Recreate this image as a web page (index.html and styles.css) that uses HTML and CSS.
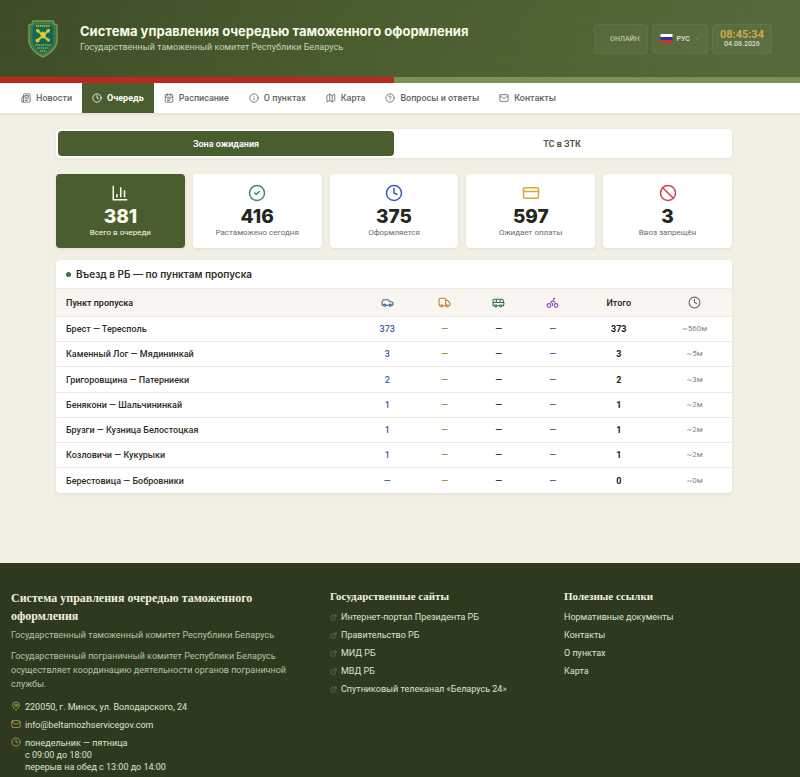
FILE: index.html
```
<!DOCTYPE html>
<html lang="ru">
<head>
    <meta charset="utf-8">
    <meta name="viewport" content="width=device-width,initial-scale=1">
    <title>Система управления очередью таможенного оформления</title>
    <link rel="stylesheet" href="styles.css">
</head>
<body>
    <!-- общие иконки -->
    <svg class="sprite" aria-hidden="true">
        <symbol id="i-clock" viewBox="0 0 24 24"><circle cx="12" cy="12" r="10"/><path d="M12 6v6l4 2"/></symbol>
        <symbol id="i-mail" viewBox="0 0 24 24"><rect x="2" y="4" width="20" height="16" rx="2"/><path d="m22 7-8.97 5.7a1.94 1.94 0 0 1-2.06 0L2 7"/></symbol>
        <symbol id="i-link" viewBox="0 0 24 24"><path d="M15 3h6v6M10 14 21 3M18 13v6a2 2 0 0 1-2 2H5a2 2 0 0 1-2-2V8a2 2 0 0 1 2-2h6"/></symbol>
    </svg>

    <header class="header">
        <svg class="logo" viewBox="0 0 30 38" role="img" aria-label="Герб">
            <path d="M5 1h20l1 3 3 1v15c0 8-6 13-14 17C7 33 1 28 1 20V5l3-1z" fill="#3f7443" stroke="#779c50" stroke-width="1.4"/>
            <path d="M6 4h18l2 3v13c0 7-5 11-11 14C9 31 4 27 4 20V7z" fill="#12665a" stroke="#4d8d48" stroke-width="0.7"/>
            <path d="M8 6h14" stroke="#b3aa35" stroke-width="2.2" stroke-dasharray="1.3 0.6"/>
            <path d="m9 10 12 11M21 10 9 21" stroke="#d8c52a" stroke-width="2.2"/>
            <path d="m8 9 4 1-3 3zM18 10l4-1-1 4zM12 14l3-3 3 4-3 4z" fill="#e5d02d"/>
            <circle cx="9.500" cy="20.500" r="2" fill="#e0cb2b"/>
            <circle cx="20.500" cy="20" r="1.400" fill="#d8c52a"/>
            <path d="M7 25h16M9 28h12M12 31h6" stroke="#a3a637" stroke-width="1.6" stroke-dasharray="1.4 0.5"/>
        </svg>
        <div class="brand">
            <h1>Система управления очередью таможенного оформления</h1>
            <p>Государственный таможенный комитет Республики Беларусь</p>
        </div>
        <div class="tools">
            <div class="chip online"><span class="online-dot"></span>ОНЛАЙН</div>
            <button class="chip lang" type="button">
                <svg class="flag" viewBox="0 0 12 9"><path fill="#fff" d="M0 0h12v3H0z"/><path fill="#2436a5" d="M0 3h12v3H0z"/><path fill="#d52b2b" d="M0 6h12v3H0z"/></svg>
                РУС
                <svg class="icon chevron" viewBox="0 0 24 24"><path d="m6 9 6 6 6-6"/></svg>
            </button>
            <div class="chip clock"><b>08:45:34</b><span>04.08.2026</span></div>
        </div>
    </header>

    <nav class="nav">
        <a href="#news"><svg class="icon" viewBox="0 0 24 24"><path d="M4 22h16a2 2 0 0 0 2-2V4a2 2 0 0 0-2-2H8a2 2 0 0 0-2 2v16a2 2 0 0 1-4 0v-9a2 2 0 0 1 2-2h2M18 14h-8M15 18h-5M10 6h8v4h-8z"/></svg>Новости</a>
        <a href="#queue" class="active"><svg class="icon"><use href="#i-clock"/></svg>Очередь</a>
        <a href="#schedule"><svg class="icon" viewBox="0 0 24 24"><path d="M8 2v4M16 2v4M3 10h18M8 14h8M8 18h5"/><rect x="3" y="4" width="18" height="18" rx="2"/></svg>Расписание</a>
        <a href="#points"><svg class="icon" viewBox="0 0 24 24"><circle cx="12" cy="12" r="10"/><path d="M12 16v-4M12 8h.01"/></svg>О пунктах</a>
        <a href="#map"><svg class="icon" viewBox="0 0 24 24"><path d="m3 6 6-3 6 3 6-3v15l-6 3-6-3-6 3zM9 3v15M15 6v15"/></svg>Карта</a>
        <a href="#faq"><svg class="icon" viewBox="0 0 24 24"><circle cx="12" cy="12" r="10"/><path d="M9.090 9a3 3 0 0 1 5.830 1c0 2-3 3-3 3M12 17h.01"/></svg>Вопросы и ответы</a>
        <a href="#contacts"><svg class="icon"><use href="#i-mail"/></svg>Контакты</a>
    </nav>

    <main class="main">
        <div class="tabs" role="tablist">
            <button type="button" role="tab" aria-selected="true" class="active">Зона ожидания</button>
            <button type="button" role="tab" aria-selected="false">ТС в ЗТК</button>
        </div>

        <section class="stats">
            <div class="stat total">
                <svg class="icon" viewBox="0 0 24 24"><path d="M3 3v18h18M18 17V9M13 17V5M8 17v-3"/></svg>
                <strong>381</strong><span>Всего в очереди</span>
            </div>
            <div class="stat">
                <svg class="icon green" viewBox="0 0 24 24"><circle cx="12" cy="12" r="10"/><path d="m9 12 2 2 4-4"/></svg>
                <strong>416</strong><span>Растаможено сегодня</span>
            </div>
            <div class="stat">
                <svg class="icon blue"><use href="#i-clock"/></svg>
                <strong>375</strong><span>Оформляется</span>
            </div>
            <div class="stat">
                <svg class="icon amber" viewBox="0 0 24 24"><rect x="2" y="5" width="20" height="14" rx="2"/><path d="M2 10h20"/></svg>
                <strong>597</strong><span>Ожидает оплаты</span>
            </div>
            <div class="stat">
                <svg class="icon red" viewBox="0 0 24 24"><circle cx="12" cy="12" r="10"/><path d="m4.900 4.900 14.200 14.200"/></svg>
                <strong>3</strong><span>Ввоз запрещён</span>
            </div>
        </section>

        <section class="queue">
            <h2>Въезд в РБ — по пунктам пропуска</h2>
            <table>
                <thead>
                    <tr>
                        <th class="name">Пункт пропуска</th>
                        <th class="car" aria-label="Легковые"><svg class="icon" viewBox="0 0 24 24"><path d="M19 17h2c.6 0 1-.4 1-1v-3c0-1-.7-1.700-1.500-1.900L16 10s-1.300-1.400-2.200-2.300A2.400 2.400 0 0 0 12 7H5c-.6 0-1.100.4-1.400.9l-1.400 2.900A3.700 3.700 0 0 0 2 12v4c0 .6.4 1 1 1h2M9 17h6"/><circle cx="7" cy="17" r="2"/><circle cx="17" cy="17" r="2"/></svg></th>
                        <th class="truck" aria-label="Грузовые"><svg class="icon" viewBox="0 0 24 24"><path d="M14 18V6a2 2 0 0 0-2-2H4a2 2 0 0 0-2 2v11a1 1 0 0 0 1 1h2M15 18H9M19 18h2a1 1 0 0 0 1-1v-3.650a1 1 0 0 0-.22-.624l-3.480-4.350A1 1 0 0 0 17.520 8H14"/><circle cx="17" cy="18" r="2"/><circle cx="7" cy="18" r="2"/></svg></th>
                        <th class="bus" aria-label="Автобусы"><svg class="icon" viewBox="0 0 24 24"><path d="M8 6v6M15 6v6M2 12h20M18 18h3s.5-1.700.8-2.800c.1-.4.2-.8.2-1.200s-.1-.8-.2-1.200l-1.400-5C20.100 6.800 19.100 6 18 6H4a2 2 0 0 0-2 2v10h3M9 18h5"/><circle cx="7" cy="18" r="2"/><circle cx="16" cy="18" r="2"/></svg></th>
                        <th class="moto" aria-label="Мотоциклы"><svg class="icon" viewBox="0 0 24 24"><circle cx="18.500" cy="17.500" r="3.500"/><circle cx="5.500" cy="17.500" r="3.500"/><circle cx="15" cy="5" r="1"/><path d="M12 17.500V14l-3-3 4-3 2 3h2"/></svg></th>
                        <th class="sum">Итого</th>
                        <th class="wait" aria-label="Ожидание"><svg class="icon"><use href="#i-clock"/></svg></th>
                    </tr>
                </thead>
                <tbody>
                    <tr><td class="name">Брест — Тересполь</td><td class="car">373</td><td class="truck">—</td><td>—</td><td class="moto">—</td><td class="sum">373</td><td class="wait">~560м</td></tr>
                    <tr><td class="name">Каменный Лог — Мядининкай</td><td class="car">3</td><td class="truck">—</td><td>—</td><td class="moto">—</td><td class="sum">3</td><td class="wait">~5м</td></tr>
                    <tr><td class="name">Григоровщина — Патерниеки</td><td class="car">2</td><td class="truck">—</td><td>—</td><td class="moto">—</td><td class="sum">2</td><td class="wait">~3м</td></tr>
                    <tr><td class="name">Бенякони — Шальчининкай</td><td class="car">1</td><td class="truck">—</td><td>—</td><td class="moto">—</td><td class="sum">1</td><td class="wait">~2м</td></tr>
                    <tr><td class="name">Брузги — Кузница Белостоцкая</td><td class="car">1</td><td class="truck">—</td><td>—</td><td class="moto">—</td><td class="sum">1</td><td class="wait">~2м</td></tr>
                    <tr><td class="name">Козловичи — Кукурыки</td><td class="car">1</td><td class="truck">—</td><td>—</td><td class="moto">—</td><td class="sum">1</td><td class="wait">~2м</td></tr>
                    <tr><td class="name">Берестовица — Бобровники</td><td class="car">—</td><td class="truck">—</td><td>—</td><td class="moto">—</td><td class="sum">0</td><td class="wait">~0м</td></tr>
                </tbody>
            </table>
        </section>
    </main>

    <footer class="footer">
        <div class="about">
            <h3>Система управления очередью таможенного оформления</h3>
            <p>Государственный таможенный комитет Республики Беларусь</p>
            <p>Государственный пограничный комитет Республики Беларусь осуществляет координацию деятельности органов пограничной службы.</p>
            <ul class="contacts">
                <li><svg class="icon" viewBox="0 0 24 24"><path d="M20 10c0 5-5.500 10.200-7.400 11.800a1 1 0 0 1-1.200 0C9.500 20.200 4 15 4 10a8 8 0 0 1 16 0"/><circle cx="12" cy="10" r="3"/></svg><span>220050, г. Минск, ул. Володарского, 24</span></li>
                <li><svg class="icon"><use href="#i-mail"/></svg><a href="mailto:info@beltamozhservicegov.com">info@beltamozhservicegov.com</a></li>
                <li><svg class="icon"><use href="#i-clock"/></svg><span>понедельник — пятница<br>с 09:00 до 18:00<br>перерыв на обед с 13:00 до 14:00</span></li>
            </ul>
        </div>
        <div>
            <h4>Государственные сайты</h4>
            <ul class="links external">
                <li><a href="#president"><svg class="icon"><use href="#i-link"/></svg>Интернет-портал Президента РБ</a></li>
                <li><a href="#government"><svg class="icon"><use href="#i-link"/></svg>Правительство РБ</a></li>
                <li><a href="#mfa"><svg class="icon"><use href="#i-link"/></svg>МИД РБ</a></li>
                <li><a href="#mvd"><svg class="icon"><use href="#i-link"/></svg>МВД РБ</a></li>
                <li><a href="#tv"><svg class="icon"><use href="#i-link"/></svg>Спутниковый телеканал «Беларусь 24»</a></li>
            </ul>
        </div>
        <div>
            <h4>Полезные ссылки</h4>
            <ul class="links">
                <li><a href="#docs">Нормативные документы</a></li>
                <li><a href="#contacts">Контакты</a></li>
                <li><a href="#points">О пунктах</a></li>
                <li><a href="#map">Карта</a></li>
            </ul>
        </div>
    </footer>
</body>
</html>
```
FILE: styles.css
```
* {
    box-sizing: border-box;
}

body {
    display: flex;
    flex-direction: column;
    min-height: 100vh;
    margin: 0;

    background-color: #f2efe4;

    font-family: Roboto, Inter, "Liberation Sans", sans-serif;
    font-size: 9px;
    line-height: 12px;
    color: #2f3029;
}

h1, h2, h3, h4, p, ul {
    margin: 0;
    padding: 0;
}

ul {
    list-style: none;
}

a {
    color: inherit;
    text-decoration: none;
}

button {
    border: 0;
    font: inherit;
    cursor: pointer;
}

.sprite {
    display: none;
}

.icon {
    flex: none;
    width: 10px;
    height: 10px;

    fill: none;
    stroke: currentColor;
    stroke-width: 2;
    stroke-linecap: round;
    stroke-linejoin: round;
}

/* шапка */
.header {
    display: flex;
    align-items: center;
    height: 77px;
    padding: 0 28px;

    background-image:
        repeating-linear-gradient(90deg, rgba(255, 255, 255, 0.01) 0 1px, transparent 1px 20px),
        repeating-linear-gradient(0deg, rgba(255, 255, 255, 0.01) 0 1px, transparent 1px 20px),
        linear-gradient(110deg, #3e4c28 0%, #4a5d2e 45%, #566b3b 100%);
}

.logo {
    flex: none;
    width: 30px;
    height: 38px;
    margin-right: 22px;
}

.brand {
    flex: 1;
}

.brand h1 {
    font-family: Inter, sans-serif;
    font-size: 13px;
    font-weight: 700;
    line-height: 16px;
    color: #fafae9;
}

.brand p {
    line-height: 16px;
    color: #cbd2b8;
}

.tools {
    display: flex;
    gap: 4px;
}

.chip {
    display: flex;
    align-items: center;
    justify-content: center;
    height: 30px;
    padding: 0 7px;

    border: 1px solid rgba(255, 255, 255, 0.05);
    border-radius: 4px;
    background-color: rgba(255, 255, 255, 0.04);

    font-size: 7px;
    color: #d9dfc8;
}

.online {
    gap: 4px;
    font-weight: 500;
    color: #bfc9a8;
}

.online-dot {
    width: 4px;
    height: 4px;
    border-radius: 50%;
    background-color: #47703a;
}

.lang {
    gap: 4px;
    font-weight: 600;
}

.flag {
    width: 13px;
    height: 9px;
}

.chevron {
    width: 6px;
    height: 6px;
    opacity: 0.5;
}

.clock {
    flex-direction: column;
    font-weight: 500;
    line-height: 9px;
}

.clock b {
    font-size: 11px;
    line-height: 11px;
    color: #d0aa4b;
}

/* меню */
.nav {
    display: flex;
    padding: 6px 11px 0;

    background-color: #fff;
    background-image: linear-gradient(90deg, #bb281d calc(50% - 6px), #7b9255 calc(50% - 6px));
    background-size: 100% 6px;
    background-repeat: no-repeat;
    box-shadow: 0 1px 3px rgba(60, 60, 30, 0.12);
}

.nav a {
    display: flex;
    align-items: center;
    gap: 5px;
    height: 30px;
    padding: 0 10px;

    font-weight: 500;
    color: #65665f;
}

.nav .active {
    background-color: #4a5d2e;
    font-weight: 700;
    color: #fff;
}

/* содержимое */
.main {
    flex: 1 0 auto;
    padding: 16px 68px 70px 56px;
}

.tabs {
    display: flex;
    margin-bottom: 16px;
    padding: 2px;

    border-radius: 4px;
    background-color: #fff;
    box-shadow: 0 1px 3px rgba(60, 60, 30, 0.08);
}

.tabs button {
    flex: 1;
    height: 25px;
    border-radius: 4px;
    background-color: transparent;
    font-weight: 600;
    color: #4f5047;
}

.tabs .active {
    background-color: #4a5d2e;
    color: #fff;
}

.stats {
    display: grid;
    grid-template-columns: repeat(5, 1fr);
    gap: 8px;
    margin-bottom: 12px;
}

.stat {
    display: flex;
    flex-direction: column;
    align-items: center;
    padding: 10px 4px;

    border-radius: 4px;
    background-color: #fff;
    box-shadow: 0 1px 3px rgba(60, 60, 30, 0.1);

    color: #6c6d66;
}

.stat .icon {
    width: 18px;
    height: 18px;
}

.stat strong {
    margin-top: 4px;
    font-family: Inter, sans-serif;
    font-size: 19px;
    font-weight: 800;
    line-height: 22px;
    color: #24271e;
}

.stat span {
    font-size: 8px;
    line-height: 10px;
}

.stat.total,
.stat.total strong {
    background-color: #4a5d2e;
    color: #fafae9;
}

.stat .green { color: #35915d; }
.stat .blue { color: #3560b5; }
.stat .amber { color: #dca52f; }
.stat .red { color: #cf4250; }

/* таблица */
.queue {
    overflow: hidden;
    border-radius: 4px;
    background-color: #fff;
    box-shadow: 0 1px 3px rgba(60, 60, 30, 0.1);
}

.queue h2 {
    display: flex;
    align-items: center;
    gap: 5px;
    padding: 8px 10px;

    font-family: Inter, sans-serif;
    font-size: 10px;
    font-weight: 600;
}

.queue h2::before {
    content: "";
    width: 5px;
    height: 5px;
    border-radius: 50%;
    background-color: #34734d;
}

table {
    width: 100%;
    height: 205px;
    border-collapse: collapse;
    table-layout: fixed;
    text-align: center;
}

th, td {
    height: 25px;
    padding: 0;
    border-top: 1px solid #efece7;
    font-weight: 500;
}

th {
    height: 28px;
    background-color: #f9f6f1;
    font-weight: 600;
}

th .icon {
    display: block;
    width: 13px;
    height: 13px;
    margin: 0 auto;
}

.name {
    width: 44.5%;
    padding-left: 10px;
    text-align: left;
}

.car { width: 9%; color: #37629a; }
.truck { width: 8%; color: #b98534; }
.bus { width: 8%; color: #2f7544; }
.moto { width: 8%; color: #5c4a91; }
th.moto { color: #8d49c8; }
.sum { width: 11.5%; }
.wait { width: 11%; color: #65665f; }

td.sum {
    font-weight: 700;
    color: #171914;
}

td.wait {
    font-size: 8px;
    font-weight: 400;
    color: #85867f;
}

/* подвал */
.footer {
    display: grid;
    grid-template-columns: 287fr 202fr 213fr;
    gap: 32px;
    padding: 26px 23px 4px 11px;

    background-color: #2d3a1f;
    color: #dfe4d0;
}

.footer h3,
.footer h4 {
    font-family: "Liberation Serif", serif;
    color: #f0f0df;
}

.footer h3 {
    margin-bottom: 3px;
    font-size: 12px;
    line-height: 18px;
}

.footer h4 {
    margin-bottom: 5px;
    font-size: 11px;
    line-height: 14px;
}

.about p {
    margin-bottom: 7px;
    line-height: 14px;
    color: #b9c2a5;
}

.contacts {
    display: grid;
    gap: 6px;
    margin-top: 10px;
}

.contacts li {
    display: flex;
    gap: 4px;
}

.contacts .icon {
    color: #b6a448;
}

.links li {
    padding: 3px 0;
}

.links a {
    display: flex;
    align-items: center;
    gap: 4px;
}

.external .icon {
    width: 7px;
    height: 7px;
    color: #71834f;
}
```
